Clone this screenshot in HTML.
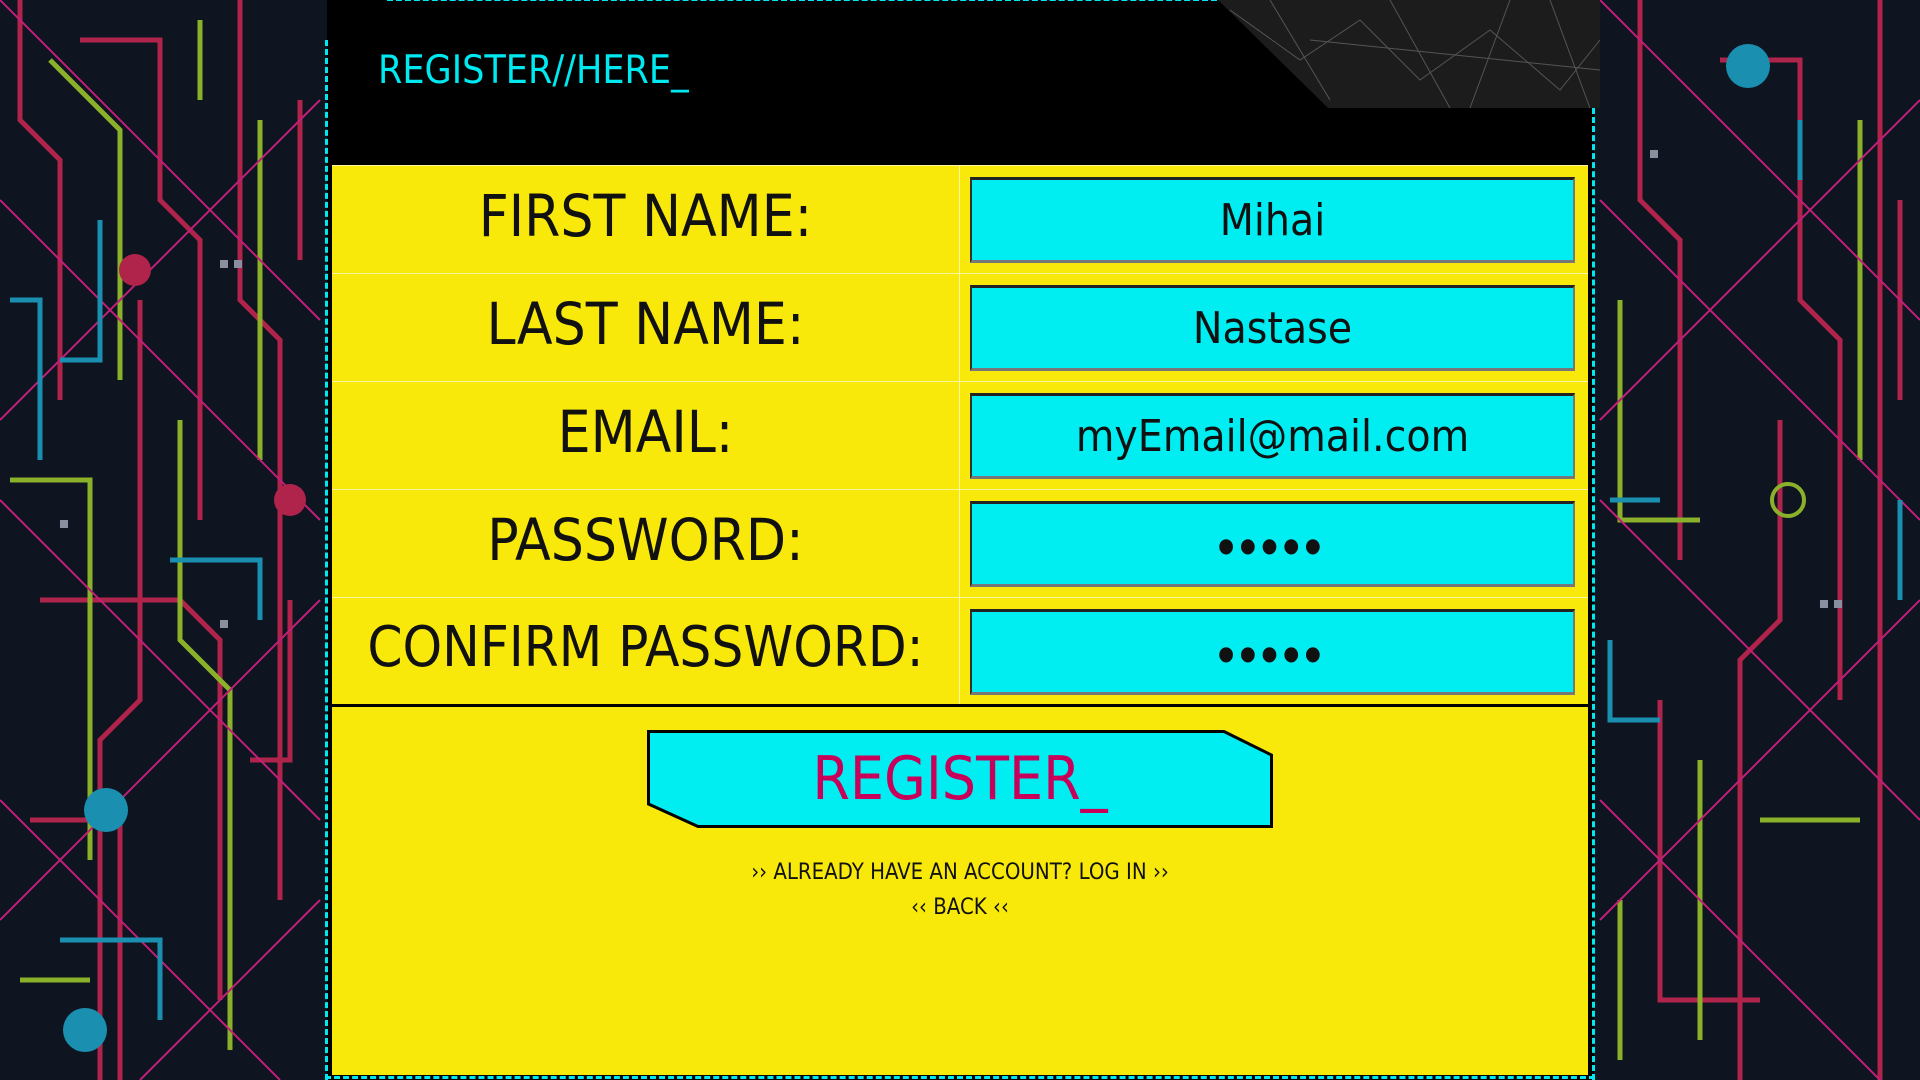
<!DOCTYPE html>
<html><head><meta charset="utf-8"><style>
*{margin:0;padding:0;box-sizing:border-box}
body{width:1920px;height:1080px;overflow:hidden;background:#0e1420;position:relative;font-family:"DejaVu Sans Condensed","Liberation Sans",sans-serif}
.bg{position:absolute;left:0;top:0}
.card{position:absolute;left:327px;top:0;width:1267px;height:1080px;background:#000;}
.dash{position:absolute;border:3px dashed #00e8f0}
.title{position:absolute;left:378px;top:48px;color:#00e8f0;font-size:39px;transform:scaleX(1.0);transform-origin:left}
.yellow{position:absolute;left:332px;top:165px;width:1256px;height:910px;background:#f8e90a}
.row{position:absolute;left:0;width:1256px;height:108px;border-top:1px solid #fff6a0}
.lab{position:absolute;left:0;width:627px;top:-4px;height:108px;line-height:108px;text-align:center;font-size:58px;color:#111;}
.vl{position:absolute;left:627px;top:0;width:1px;height:108px;background:#fff6a0}
.inp{position:absolute;left:638px;top:11px;width:605px;height:86px;background:#00eef2;border-top:3px solid #222;border-left:2px solid #333;border-bottom:3px solid #777;border-right:2px solid #777;text-align:center;line-height:82px;font-size:44px;color:#111}
.dots{font-size:20px;letter-spacing:6px}
.sep{position:absolute;left:0;top:539px;width:1256px;height:3px;background:#000}
.btn{position:absolute;left:315px;top:565px;width:626px;height:98px}
.btntxt{position:absolute;left:315px;top:565px;width:626px;height:98px;text-align:center;line-height:98px;font-size:60px;color:#c8005a}
.link{position:absolute;left:0;width:1256px;text-align:center;font-size:22px;color:#111}
</style></head><body>
<svg class="bg" width="1920" height="1080" xmlns="http://www.w3.org/2000/svg">
<g fill="none" stroke-width="5">
<path d="M20 0 V120 L60 160 V400 M80 40 H160 V200 L200 240 V520 M140 300 V700 L100 740 V1080 M240 0 V300 L280 340 V900 M40 600 H180 L220 640 V1000 M30 820 H120 V1080 M300 100 V260 M290 600 V760 H250" stroke="#b0234a"/>
<path d="M50 60 L120 130 V380 M180 420 V640 L230 690 V1050 M10 480 H90 V860 M260 120 V460 M200 20 V100 M20 980 H90" stroke="#8bb02a"/>
<path d="M0 200 L320 520 M0 500 L320 820 M0 800 L280 1080 M320 100 L0 420 M320 600 L0 920 M0 0 L320 320 M320 900 L140 1080" stroke="#c0207a" stroke-width="2"/>
<path d="M100 220 V360 H60 M170 560 H260 V620 M60 940 H160 V1020 M10 300 H40 V460" stroke="#1a8fb0"/>
<path d="M1640 0 V200 L1680 240 V560 M1720 60 H1800 V300 L1840 340 V700 M1880 0 V1080 M1660 700 V1000 H1760 M1780 420 V620 L1740 660 V1080 M1900 200 V400" stroke="#b0234a"/>
<path d="M1620 300 V520 H1700 M1700 760 V1040 M1860 120 V460 M1760 820 H1860 M1620 900 V1060" stroke="#8bb02a"/>
<path d="M1600 200 L1920 520 M1600 500 L1920 820 M1600 800 L1880 1080 M1920 100 L1600 420 M1920 600 L1600 920 M1600 0 L1920 320" stroke="#c0207a" stroke-width="2"/>
<path d="M1610 500 H1660 M1610 640 V720 H1660 M1800 120 V180 M1900 500 V600" stroke="#1a8fb0"/>
</g>
<g fill="#8a8fa0"><rect x="220" y="260" width="8" height="8"/><rect x="234" y="260" width="8" height="8"/><rect x="220" y="620" width="8" height="8"/><rect x="1820" y="600" width="8" height="8"/><rect x="1834" y="600" width="8" height="8"/><rect x="1650" y="150" width="8" height="8"/><rect x="60" y="520" width="8" height="8"/></g>
<circle cx="106" cy="810" r="22" fill="#1a8fb0"/><circle cx="1748" cy="66" r="22" fill="#1a8fb0"/>
<circle cx="85" cy="1030" r="22" fill="#1a8fb0"/><circle cx="1788" cy="500" r="16" fill="none" stroke="#8bb02a" stroke-width="4"/>
<circle cx="135" cy="270" r="16" fill="#b0234a"/><circle cx="290" cy="500" r="16" fill="#b0234a"/>
</svg>
<div class="card"></div>
<svg style="position:absolute;left:1210px;top:0" width="390" height="110"><polygon points="8,0 390,0 390,108 118,108" fill="#1c1c1c"/><g stroke="#555" stroke-width="1" fill="none"><path d="M20 10 L90 60 L150 20 L210 80 L280 30 L350 90 L390 40 M60 0 L120 100 M180 0 L240 108 M300 0 L260 108 M340 0 L380 108 M100 40 L390 70"/></g></svg>
<div class="dash" style="left:387px;top:-2px;width:830px;height:4px;border-width:3px 0 0 0"></div>
<div class="dash" style="left:325px;top:40px;width:0;height:1040px;border-width:0 0 0 3px"></div>
<div class="dash" style="left:1592px;top:108px;width:0;height:972px;border-width:0 0 0 3px"></div>
<div class="dash" style="left:325px;top:1076px;width:1270px;height:4px;border-width:3px 0 0 0"></div>
<div class="title">REGISTER//HERE_</div>
<div class="yellow">
 <div class="row" style="top:0"><div class="lab">FIRST NAME:</div><div class="vl"></div><div class="inp">Mihai</div></div>
 <div class="row" style="top:108px"><div class="lab">LAST NAME:</div><div class="vl"></div><div class="inp">Nastase</div></div>
 <div class="row" style="top:216px"><div class="lab">EMAIL:</div><div class="vl"></div><div class="inp">myEmail@mail.com</div></div>
 <div class="row" style="top:324px"><div class="lab">PASSWORD:</div><div class="vl"></div><div class="inp dots">●●●●●</div></div>
 <div class="row" style="top:432px"><div class="lab" style="font-size:56px">CONFIRM PASSWORD:</div><div class="vl"></div><div class="inp dots">●●●●●</div></div>
 <div class="sep"></div>
 <svg class="btn" viewBox="0 0 626 98"><polygon points="1.5,1.5 577,1.5 624.5,25 624.5,96.5 51,96.5 1.5,74" fill="#00eef2" stroke="#000" stroke-width="3"/></svg>
 <div class="btntxt">REGISTER_</div>
 <div class="link" style="top:695px">›› ALREADY HAVE AN ACCOUNT? LOG IN ››</div>
 <div class="link" style="top:730px">‹‹ BACK ‹‹</div>
</div>
</body></html>
